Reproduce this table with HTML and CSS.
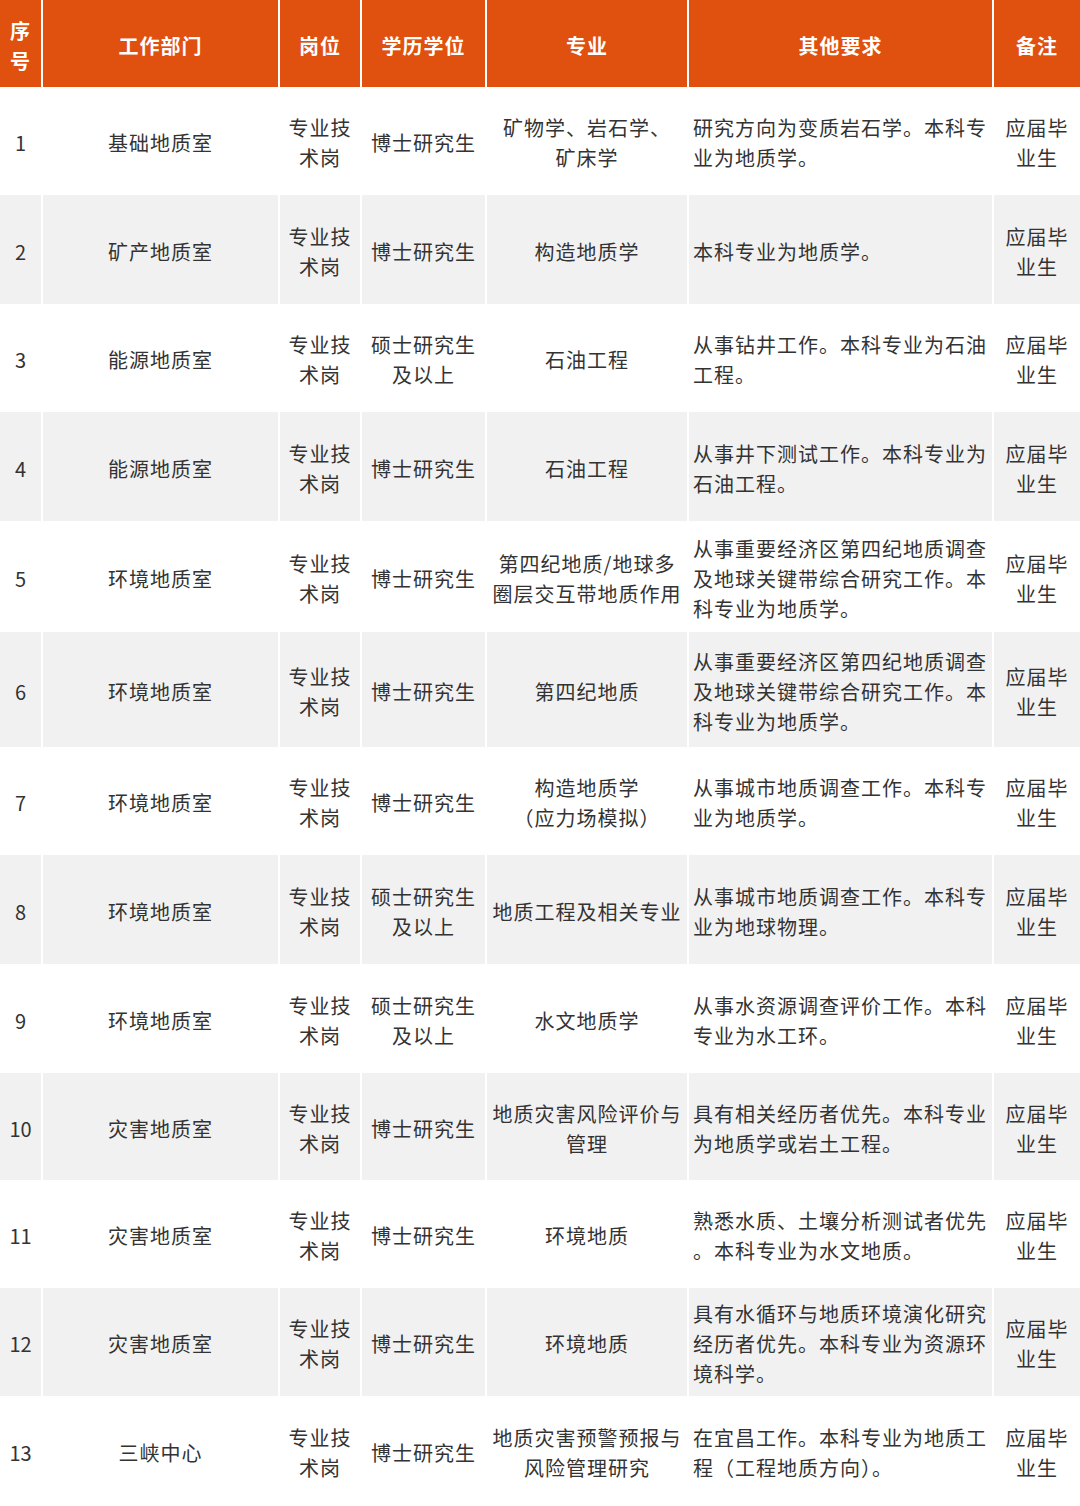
FILE: index.html
```html
<!DOCTYPE html>
<html lang="zh-CN">
<head>
<meta charset="utf-8">
<title>招聘岗位表</title>
<link rel="stylesheet" href="styles.css">
</head>
<body>
<div class="table">
  <div class="row head">
    <div class="cell num">序号</div>
    <div class="cell">工作部门</div>
    <div class="cell">岗位</div>
    <div class="cell">学历学位</div>
    <div class="cell">专业</div>
    <div class="cell">其他要求</div>
    <div class="cell note">备注</div>
  </div>
  <div class="row h108">
    <div class="cell num">1</div>
    <div class="cell">基础地质室</div>
    <div class="cell">专业技术岗</div>
    <div class="cell">博士研究生</div>
    <div class="cell">矿物学、岩石学、<br>矿床学</div>
    <div class="cell req">研究方向为变质岩石学。本科专业为地质学。</div>
    <div class="cell note">应届毕业生</div>
  </div>
  <div class="row alt h109">
    <div class="cell num">2</div>
    <div class="cell">矿产地质室</div>
    <div class="cell">专业技术岗</div>
    <div class="cell">博士研究生</div>
    <div class="cell">构造地质学</div>
    <div class="cell req">本科专业为地质学。</div>
    <div class="cell note">应届毕业生</div>
  </div>
  <div class="row h108">
    <div class="cell num">3</div>
    <div class="cell">能源地质室</div>
    <div class="cell">专业技术岗</div>
    <div class="cell">硕士研究生及以上</div>
    <div class="cell">石油工程</div>
    <div class="cell req">从事钻井工作。本科专业为石油工程。</div>
    <div class="cell note">应届毕业生</div>
  </div>
  <div class="row alt h109">
    <div class="cell num">4</div>
    <div class="cell">能源地质室</div>
    <div class="cell">专业技术岗</div>
    <div class="cell">博士研究生</div>
    <div class="cell">石油工程</div>
    <div class="cell req">从事井下测试工作。本科专业为石油工程。</div>
    <div class="cell note">应届毕业生</div>
  </div>
  <div class="row h111">
    <div class="cell num">5</div>
    <div class="cell">环境地质室</div>
    <div class="cell">专业技术岗</div>
    <div class="cell">博士研究生</div>
    <div class="cell">第四纪地质/地球多<br>圈层交互带地质作用</div>
    <div class="cell req">从事重要经济区第四纪地质调查及地球关键带综合研究工作。本科专业为地质学。</div>
    <div class="cell note">应届毕业生</div>
  </div>
  <div class="row alt h115">
    <div class="cell num">6</div>
    <div class="cell">环境地质室</div>
    <div class="cell">专业技术岗</div>
    <div class="cell">博士研究生</div>
    <div class="cell">第四纪地质</div>
    <div class="cell req">从事重要经济区第四纪地质调查及地球关键带综合研究工作。本科专业为地质学。</div>
    <div class="cell note">应届毕业生</div>
  </div>
  <div class="row h108">
    <div class="cell num">7</div>
    <div class="cell">环境地质室</div>
    <div class="cell">专业技术岗</div>
    <div class="cell">博士研究生</div>
    <div class="cell">构造地质学<br>（应力场模拟）</div>
    <div class="cell req">从事城市地质调查工作。本科专业为地质学。</div>
    <div class="cell note">应届毕业生</div>
  </div>
  <div class="row alt h109">
    <div class="cell num">8</div>
    <div class="cell">环境地质室</div>
    <div class="cell">专业技术岗</div>
    <div class="cell">硕士研究生及以上</div>
    <div class="cell">地质工程及相关专业</div>
    <div class="cell req">从事城市地质调查工作。本科专业为地球物理。</div>
    <div class="cell note">应届毕业生</div>
  </div>
  <div class="row h109">
    <div class="cell num">9</div>
    <div class="cell">环境地质室</div>
    <div class="cell">专业技术岗</div>
    <div class="cell">硕士研究生及以上</div>
    <div class="cell">水文地质学</div>
    <div class="cell req">从事水资源调查评价工作。本科专业为水工环。</div>
    <div class="cell note">应届毕业生</div>
  </div>
  <div class="row alt h107">
    <div class="cell num">10</div>
    <div class="cell">灾害地质室</div>
    <div class="cell">专业技术岗</div>
    <div class="cell">博士研究生</div>
    <div class="cell">地质灾害风险评价与<br>管理</div>
    <div class="cell req">具有相关经历者优先。本科专业为地质学或岩土工程。</div>
    <div class="cell note">应届毕业生</div>
  </div>
  <div class="row h108">
    <div class="cell num">11</div>
    <div class="cell">灾害地质室</div>
    <div class="cell">专业技术岗</div>
    <div class="cell">博士研究生</div>
    <div class="cell">环境地质</div>
    <div class="cell req">熟悉水质、土壤分析测试者优先<br>。本科专业为水文地质。</div>
    <div class="cell note">应届毕业生</div>
  </div>
  <div class="row alt h108">
    <div class="cell num">12</div>
    <div class="cell">灾害地质室</div>
    <div class="cell">专业技术岗</div>
    <div class="cell">博士研究生</div>
    <div class="cell">环境地质</div>
    <div class="cell req">具有水循环与地质环境演化研究经历者优先。本科专业为资源环境科学。</div>
    <div class="cell note">应届毕业生</div>
  </div>
  <div class="row h110">
    <div class="cell num">13</div>
    <div class="cell">三峡中心</div>
    <div class="cell">专业技术岗</div>
    <div class="cell">博士研究生</div>
    <div class="cell">地质灾害预警预报与<br>风险管理研究</div>
    <div class="cell req">在宜昌工作。本科专业为地质工程（工程地质方向）。</div>
    <div class="cell note">应届毕业生</div>
  </div>
</div>
</body>
</html>
```

FILE: styles.css
```css
html, body {
  margin: 0;
  padding: 0;
  background: #ffffff;
}

body {
  font-family: "Noto Sans CJK SC", "Noto Sans", sans-serif;
  color: #333333;
  font-size: 20px;
  line-height: 30px;
  width: 1080px;
}

.table {
  display: flex;
  flex-direction: column;
}

.row {
  display: grid;
  grid-template-columns: 41px 235px 80px 123px 200px 303px 86px;
  column-gap: 2px;
  height: 108px;
}

.row.h107 { height: 107px; }
.row.h108 { height: 108px; }
.row.h109 { height: 109px; }
.row.h110 { height: 110px; }
.row.h111 { height: 111px; }
.row.h115 { height: 115px; }

.cell {
  display: flex;
  align-items: center;
  justify-content: center;
  text-align: center;
  letter-spacing: 1px;
  padding-top: 4px;
  overflow: hidden;
}

.row.alt .cell {
  background: #f2f1f2;
}

.row.head {
  height: 87px;
}

.row.head .cell {
  background: #e0500e;
  color: #ffffff;
  font-weight: bold;
  letter-spacing: 1px;
}

.cell.num {
  letter-spacing: 0;
  padding-left: 2px;
  padding-right: 2px;
}

.row.head .cell.num {
  padding-left: 10px;
  padding-right: 10px;
}

.cell.note {
  padding-left: 10px;
  padding-right: 10px;
}

.cell.req {
  justify-content: flex-start;
  text-align: left;
  padding-left: 4px;
  padding-right: 1px;
}
```
